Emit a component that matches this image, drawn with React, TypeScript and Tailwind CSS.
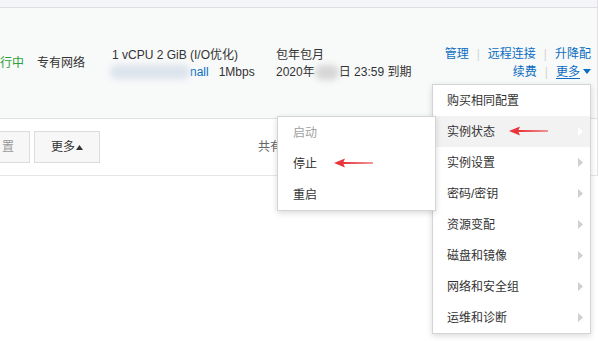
import { ReactNode } from "react";

const mainItems = [
  "购买相同配置",
  "实例状态",
  "实例设置",
  "密码/密钥",
  "资源变配",
  "磁盘和镜像",
  "网络和安全组",
  "运维和诊断",
];

const Sep = () => <span className="mx-[8px] text-[#d5d5d5]">|</span>;

const RedArrow = ({ className }: { className: string }) => (
  <svg className={className} width="40" height="10" viewBox="0 0 40 10">
    <path d="M0 5 L11 0.5 L9.5 4 L39 4.6 L39 5.4 L9.5 6 L11 9.5 Z" fill="#e8363a" />
  </svg>
);

const Caret = ({ light }: { light?: boolean }) => (
  <svg width="5" height="9" viewBox="0 0 5 9">
    <path d="M0 0 L5 4.5 L0 9 Z" fill={light ? "#ffffff" : "#cfcfcf"} />
  </svg>
);

const Blur = ({ className }: { className: string }) => (
  <span className={"inline-block rounded-full blur-[3px] " + className} />
);

function Link({ children }: { children: ReactNode }) {
  return <span className="text-[#0a6dc2]">{children}</span>;
}

const App = () => {
  return (
    <div className="relative w-[599px] h-[341px] overflow-hidden bg-white font-['Liberation_Sans','Noto_Sans_CJK_SC',sans-serif] text-[12px] text-[#333]">
      <div className="h-[8px] bg-[#f4f5f9] border-b border-[#dcdee3] border-r border-r-[#e3e3e3] w-[598px]" />
      <div className="h-[111px] w-[598px] bg-[#f8f9f9] border-b border-[#e0e0e0] border-r border-r-[#e3e3e3] flex items-center">
        <div className="w-[37px] text-[#2c9f3a]">行中</div>
        <div className="w-[75px]">专有网络</div>
        <div className="w-[164px] leading-[17px] mt-[1px]">
          <div>1 vCPU 2 GiB (I/O优化)</div>
          <div className="flex items-center">
            <Blur className="w-[80px] h-[14px] bg-[#dbe3ec] -ml-[2px]" />
            <Link>nall</Link>
            <span className="ml-[10px]">1Mbps</span>
          </div>
        </div>
        <div className="leading-[17px] mt-[1px]">
          <div>包年包月</div>
          <div className="flex items-center">
            2020年
            <Blur className="w-[24px] h-[15px] bg-[#d6d6d6]" />
            日 23:59 到期
          </div>
        </div>
        <div className="ml-auto pr-[6px] leading-[18px] flex flex-col items-end -mt-[1px]">
          <div>
            <Link>管理</Link>
            <Sep />
            <Link>远程连接</Link>
            <Sep />
            <Link>升降配</Link>
          </div>
          <div className="flex items-center">
            <Link>续费</Link>
            <Sep />
            <span className="text-[#0a6dc2] underline underline-offset-2">更多</span>
            <svg className="ml-[3px]" width="8" height="5" viewBox="0 0 8 5">
              <path d="M0 0 L8 0 L4 5 Z" fill="#0a6dc2" />
            </svg>
          </div>
        </div>
      </div>
      <div className="h-[57px] w-[598px] border-b border-[#e5e5e5] border-r border-r-[#e3e3e3] flex items-center">
        <div className="-ml-[20px] w-[50px] h-[32px] border border-[#dcdcdc] bg-[#f7f7f7] text-[#9a9a9a] flex items-center justify-end pr-[15px]">
          置
        </div>
        <div className="ml-[4px] w-[66px] h-[32px] border border-[#dcdcdc] bg-[#f7f7f7] flex items-center justify-center">
          更多
          <svg className="ml-[1px]" width="7" height="5" viewBox="0 0 7 5">
            <path d="M0 5 L7 5 L3.5 0 Z" fill="#333" />
          </svg>
        </div>
        <div className="ml-[158px] text-[#666]">共有</div>
      </div>

      <div className="absolute left-[432px] top-[84px] w-[159px] bg-white border border-[#d4d4d4] shadow-[0_2px_6px_rgba(0,0,0,0.15)] z-10">
        {mainItems.map((item, i) => (
          <div
            key={item}
            className={
              "h-[31px] flex items-center justify-between pl-[14px] pr-[7px] " +
              (i === 1 ? "bg-[#f2f2f2]" : "")
            }
          >
            <span>{item}</span>
            {i > 0 && <Caret light={i === 1} />}
          </div>
        ))}
      </div>

      <div className="absolute left-[277px] top-[116px] w-[159px] bg-white border border-[#d4d4d4] shadow-[0_2px_6px_rgba(0,0,0,0.15)] z-20">
        <div className="h-[31px] flex items-center pl-[15px] text-[#a0a0a0]">启动</div>
        <div className="h-[31px] flex items-center pl-[15px]">停止</div>
        <div className="h-[31px] flex items-center pl-[15px]">重启</div>
      </div>

      <RedArrow className="absolute left-[334px] top-[158px] z-30" />
      <RedArrow className="absolute left-[509px] top-[126px] z-30" />
    </div>
  );
};

export default App;
